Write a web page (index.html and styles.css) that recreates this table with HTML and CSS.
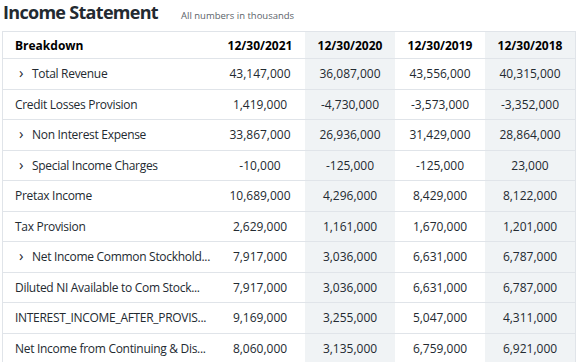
FILE: index.html
```html
<!DOCTYPE html>
<html lang="en">
<head>
    <meta charset="UTF-8">
    <title>Income Statement</title>
    <link rel="stylesheet" href="styles.css">
</head>
<body>
    <div class="heading">
        <h1>Income Statement</h1>
        <span class="note">All numbers in thousands</span>
    </div>

    <table class="fin-table">
        <thead>
            <tr>
                <th class="label">Breakdown</th>
                <th>12/30/2021</th>
                <th class="alt">12/30/2020</th>
                <th>12/30/2019</th>
                <th class="alt">12/30/2018</th>
            </tr>
        </thead>
        <tbody>
            <tr>
                <td class="label"><span class="chev">&rsaquo;</span>Total Revenue</td>
                <td>43,147,000</td><td class="alt">36,087,000</td><td>43,556,000</td><td class="alt">40,315,000</td>
            </tr>
            <tr>
                <td class="label">Credit Losses Provision</td>
                <td>1,419,000</td><td class="alt">-4,730,000</td><td>-3,573,000</td><td class="alt">-3,352,000</td>
            </tr>
            <tr>
                <td class="label"><span class="chev">&rsaquo;</span>Non Interest Expense</td>
                <td>33,867,000</td><td class="alt">26,936,000</td><td>31,429,000</td><td class="alt">28,864,000</td>
            </tr>
            <tr>
                <td class="label"><span class="chev">&rsaquo;</span>Special Income Charges</td>
                <td>-10,000</td><td class="alt">-125,000</td><td>-125,000</td><td class="alt">23,000</td>
            </tr>
            <tr>
                <td class="label">Pretax Income</td>
                <td>10,689,000</td><td class="alt">4,296,000</td><td>8,429,000</td><td class="alt">8,122,000</td>
            </tr>
            <tr>
                <td class="label">Tax Provision</td>
                <td>2,629,000</td><td class="alt">1,161,000</td><td>1,670,000</td><td class="alt">1,201,000</td>
            </tr>
            <tr>
                <td class="label"><span class="chev">&rsaquo;</span>Net Income Common Stockhold...</td>
                <td>7,917,000</td><td class="alt">3,036,000</td><td>6,631,000</td><td class="alt">6,787,000</td>
            </tr>
            <tr>
                <td class="label">Diluted NI Available to Com Stock...</td>
                <td>7,917,000</td><td class="alt">3,036,000</td><td>6,631,000</td><td class="alt">6,787,000</td>
            </tr>
            <tr>
                <td class="label">INTEREST_INCOME_AFTER_PROVIS...</td>
                <td>9,169,000</td><td class="alt">3,255,000</td><td>5,047,000</td><td class="alt">4,311,000</td>
            </tr>
            <tr>
                <td class="label">Net Income from Continuing &amp; Dis...</td>
                <td>8,060,000</td><td class="alt">3,135,000</td><td>6,759,000</td><td class="alt">6,921,000</td>
            </tr>
        </tbody>
    </table>
</body>
</html>
```

FILE: styles.css
```css
:root {
    --ink: #232a31;
    --muted: #5b636a;
    --line: #e0e4e9;
    --alt-bg: #f0f3f5;
}

body {
    margin: 0;
    padding: 0 2px;
    background: #fff;
    font-family: "Open Sans", "Noto Sans", sans-serif;
    color: var(--ink);
}

.heading {
    display: flex;
    align-items: baseline;
    height: 31px;
}

h1 {
    margin: 0 0 0 1px;
    font-size: 18px;
    font-weight: 700;
    line-height: 25px;
    letter-spacing: -0.7px;
    color: var(--ink);
}

.note {
    margin-left: 23px;
    font-size: 9.5px;
    color: var(--muted);
}

.fin-table {
    border-collapse: collapse;
    table-layout: fixed;
    width: 572px;
    font-size: 12px;
}

.fin-table th,
.fin-table td {
    width: 90px;
    padding: 0;
    text-align: center;
    border-bottom: 1px solid var(--line);
    white-space: nowrap;
}

.fin-table th {
    height: 26px;
    font-weight: 700;
    color: #000;
    border-top: 1px solid var(--line);
}

.fin-table td {
    height: 29.5px;
}

.fin-table .label {
    width: 200px;
    padding-left: 12px;
    text-align: left;
    letter-spacing: -0.3px;
    border-left: 1px solid var(--line);
}

.fin-table th.label {
    letter-spacing: 0;
}

.fin-table .alt {
    background: var(--alt-bg);
}

.fin-table tr > :last-child {
    border-right: 1px solid var(--line);
}

.chev {
    display: inline-block;
    width: 13px;
    margin-left: 4px;
    font-size: 15px;
    line-height: 1;
}
```
